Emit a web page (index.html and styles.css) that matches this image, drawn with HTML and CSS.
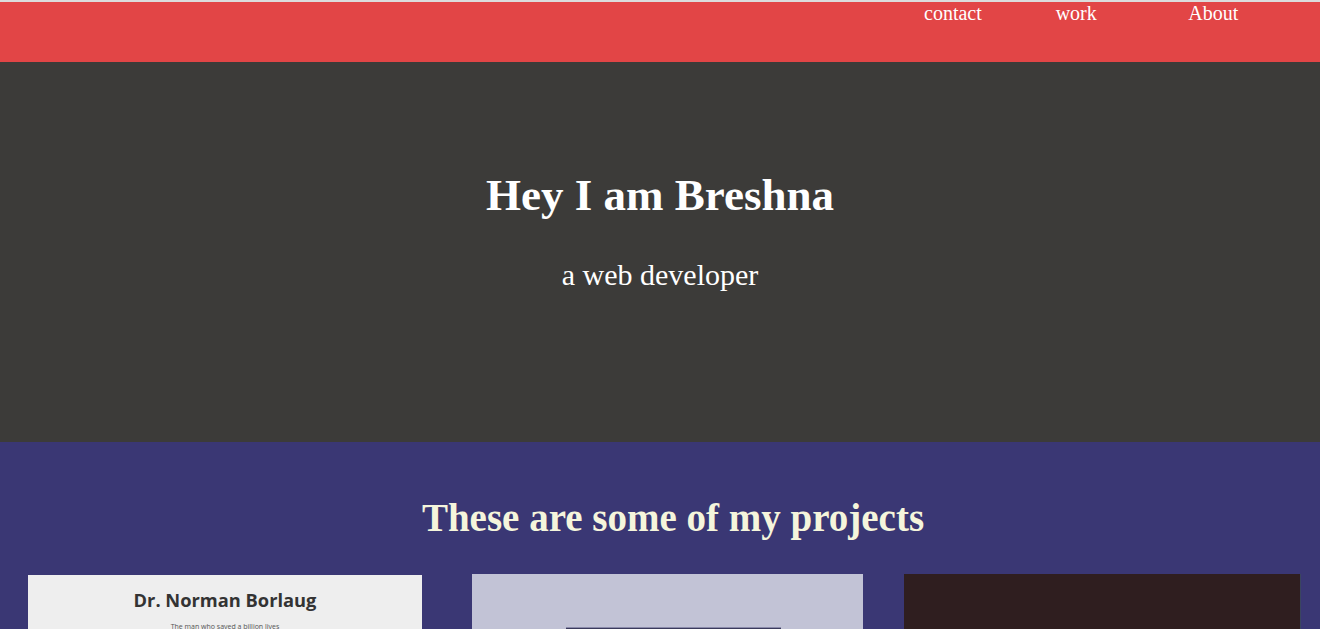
FILE: index.html
```html
<!DOCTYPE html>
<html lang="en">
<head>
<meta charset="utf-8">
<title>Breshna</title>
<link rel="stylesheet" href="styles.css">
</head>
<body>
<header class="topbar">
  <ul class="nav">
    <li><a href="#">contact</a></li>
    <li><a href="#">work</a></li>
    <li><a href="#">About</a></li>
  </ul>
</header>
<section class="hero">
  <h1 class="hero-title">Hey I am Breshna</h1>
  <p class="hero-sub">a web developer</p>
</section>
<section class="projects">
  <h2 class="projects-title">These are some of my projects</h2>
  <div class="cards">
    <div class="card card-borlaug">
      <div class="borlaug-name">Dr. Norman Borlaug</div>
      <div class="borlaug-tag">The man who saved a billion lives</div>
    </div>
    <div class="card card-lavender">
      <div class="lavender-box"></div>
    </div>
    <div class="card card-dark"></div>
  </div>
</section>
</body>
</html>
```

FILE: styles.css
```css
html, body {
  margin: 0;
  padding: 0;
}
body {
  background: #dcdcdc;
  padding-top: 2px;
  font-family: "Liberation Serif", "Times New Roman", serif;
  overflow: hidden;
}
.topbar {
  background: #e24546;
  height: 60px;
  display: flex;
  justify-content: flex-end;
}
.nav {
  list-style: none;
  margin: 0;
  padding: 0;
  display: flex;
  width: 30%;
}
.nav li {
  width: 33.333%;
  font-size: 20px;
  line-height: 23px;
}
.nav li:last-child {
  padding-left: 1px;
}
.nav a {
  color: #ffffff;
  text-decoration: none;
}
.hero {
  background: #3c3b39;
  height: 380px;
  box-sizing: border-box;
  padding-top: 107px;
  text-align: center;
  color: #ffffff;
}
.hero-title {
  margin: 0;
  font-size: 45px;
  font-weight: bold;
  line-height: 52px;
}
.hero-sub {
  margin: 37px 0 0;
  font-size: 30px;
  line-height: 34px;
}
.projects {
  background: #3a3774;
  padding-top: 54px;
  height: 200px;
}
.projects-title {
  margin: 0;
  padding-left: 26px;
  text-align: center;
  color: #f5f5dc;
  font-size: 39px;
  line-height: 44px;
  font-weight: bold;
}
.cards {
  display: flex;
  align-items: flex-start;
  margin-top: 34px;
  padding-left: 28px;
}
.card {
  height: 200px;
  box-sizing: border-box;
}
.card-borlaug {
  width: 394px;
  margin-top: 1px;
  background: #eeeeee;
  text-align: center;
  padding-top: 13px;
  font-family: "Open Sans", "Noto Sans", sans-serif;
}
.borlaug-name {
  font-size: 18.3px;
  font-weight: 700;
  color: #333333;
  line-height: 24px;
}
.borlaug-tag {
  font-size: 7px;
  color: #555555;
  margin-top: 10px;
  line-height: 10px;
}
.card-lavender {
  width: 391px;
  margin-left: 50px;
  background: #c2c3d6;
  padding-top: 53px;
  display: flex;
  justify-content: center;
}
.lavender-box {
  width: 215px;
  height: 60px;
  margin-left: 12px;
  background: #3a3a5c;
  border-top: 1px solid #8a8aaa;
}
.card-dark {
  width: 397px;
  margin-left: 41px;
  background: #2f1e1f;
  border-right: 1px solid #3a4560;
}
```
